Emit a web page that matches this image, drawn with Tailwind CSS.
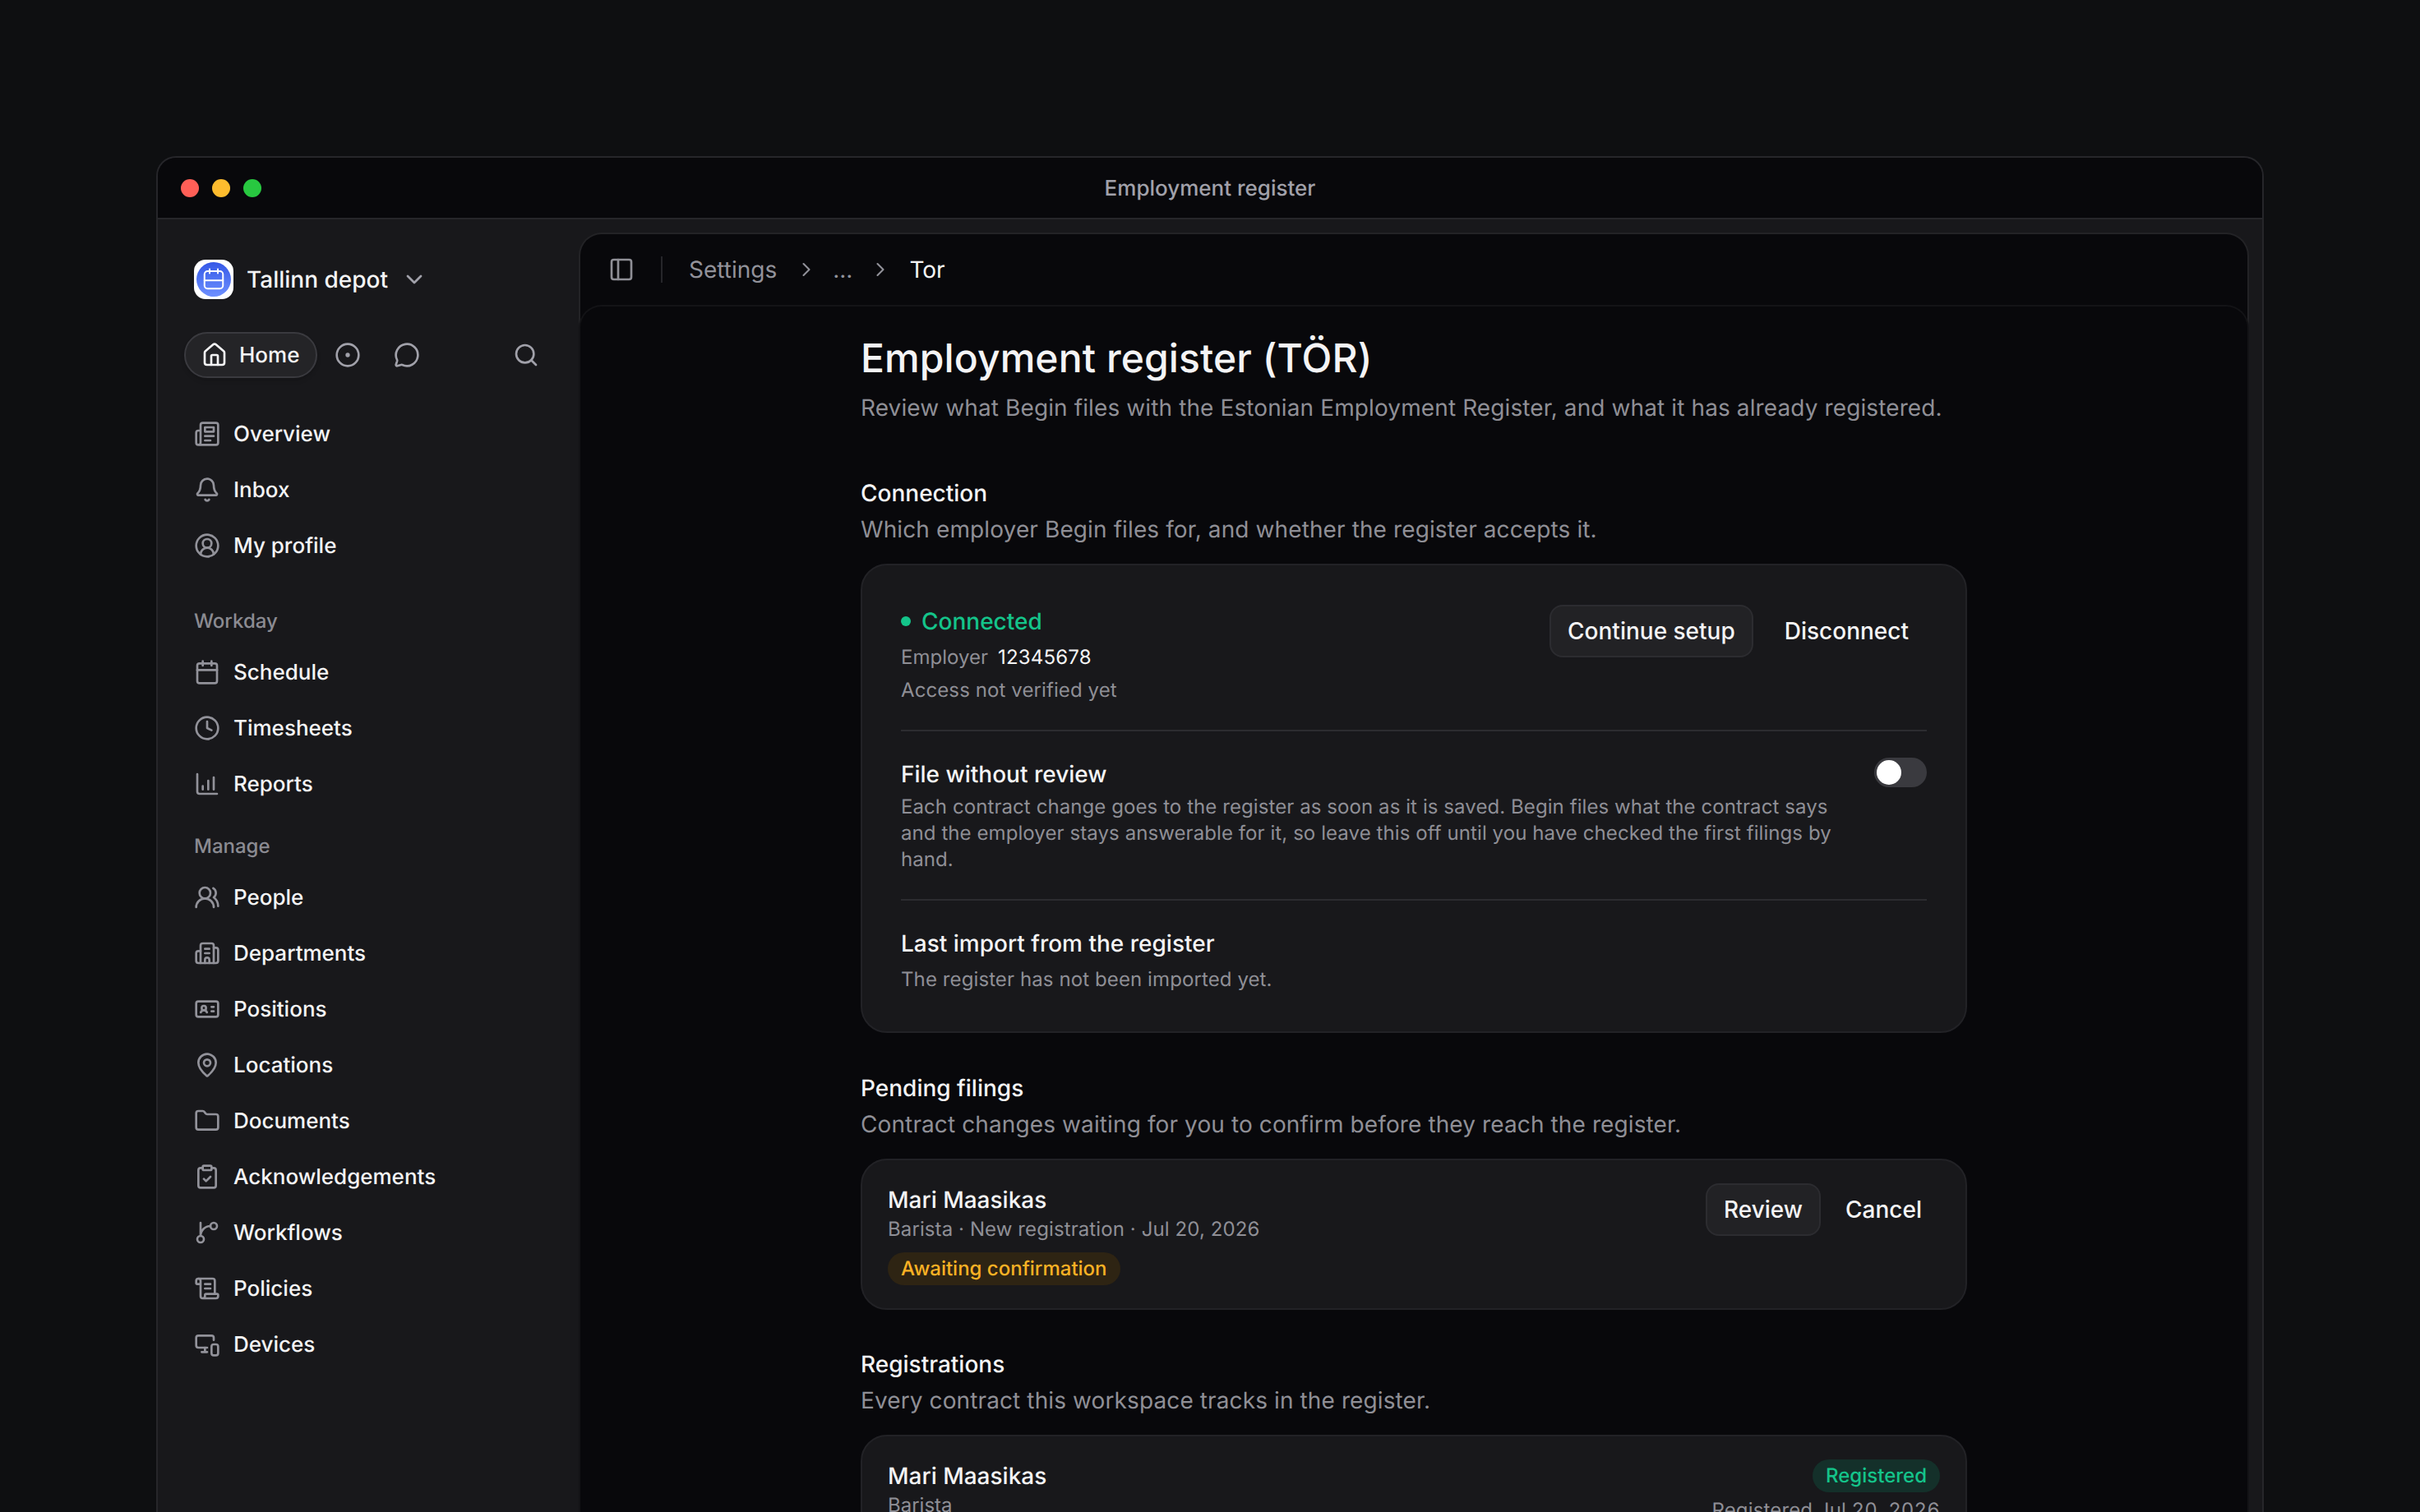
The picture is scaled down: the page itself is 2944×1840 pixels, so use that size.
<!DOCTYPE html>
<html>
<head>
  <meta charset="UTF-8">
  <meta name="viewport" content="width=device-width, initial-scale=1.0">
  <script src="https://cdn.jsdelivr.net/npm/@tailwindcss/browser@4"></script>
</head>
<body class="bg-[#0e0f11] font-['Inter',sans-serif] text-[#f4f4f5] [text-rendering:geometricPrecision]">
  <div class="h-[1840px] overflow-hidden pt-[190px] px-[190px]">
    <div class="w-[2564px] h-[1700px] flex flex-col rounded-t-[24px] border-2 border-b-0 border-[#26262a] bg-[#18181b] overflow-hidden">

      <!-- title bar -->
      <div class="relative h-[75px] shrink-0 flex items-center justify-center pt-[1px] bg-[#08080b] border-b-2 border-[#26262a]">
        <div class="absolute left-[28px] top-[26px] flex gap-[16px]">
          <span class="w-[22px] h-[22px] rounded-full bg-[#ff5f57]"></span>
          <span class="w-[22px] h-[22px] rounded-full bg-[#febc2e]"></span>
          <span class="w-[22px] h-[22px] rounded-full bg-[#28c840]"></span>
        </div>
        <span class="text-[26px] font-medium text-[#a1a1aa]">Employment register</span>
      </div>

      <div class="flex flex-1 min-h-0">
        <!-- sidebar -->
        <aside class="w-[512px] shrink-0 flex flex-col px-[44px] pt-[49px]">
          <div class="flex items-center h-[48px]">
            <div class="w-[48px] h-[48px] rounded-[14px] bg-white flex items-center justify-center">
              <div class="w-[42px] h-[42px] rounded-full bg-linear-to-b from-[#3557e6] to-[#6f90ff] flex items-center justify-center">
                <svg class="w-[30px] h-[30px] text-white" viewBox="0 0 24 24" fill="none" stroke="currentColor" stroke-width="1.6" stroke-linecap="round" stroke-linejoin="round"><path d="M8 2v4M16 2v4"/><rect x="3" y="4" width="18" height="17" rx="3"/><path d="M3 13h18"/></svg>
              </div>
            </div>
            <span class="ml-[16px] text-[28px] font-medium">Tallinn depot</span>
            <svg class="ml-[16px] w-8 h-8 text-[#a1a1aa]" viewBox="0 0 24 24" fill="none" stroke="currentColor" stroke-width="2" stroke-linecap="round" stroke-linejoin="round"><path d="m6 9 6 6 6-6"/></svg>
          </div>

          <div class="flex items-center h-[56px] mt-[40px] -ml-[12px]">
            <div class="h-[56px] w-[162px] flex items-center gap-[14px] pl-[19px] rounded-full border-2 border-[#3a3a3f] bg-[#242427] shadow-md">
              <svg class="w-8 h-8 shrink-0" viewBox="0 0 24 24" fill="none" stroke="currentColor" stroke-width="2" stroke-linecap="round" stroke-linejoin="round"><path d="M15 21v-8a1 1 0 0 0-1-1h-4a1 1 0 0 0-1 1v8"/><path d="M3 10a2 2 0 0 1 .709-1.528l7-5.999a2 2 0 0 1 2.582 0l7 5.999A2 2 0 0 1 21 10v9a2 2 0 0 1-2 2H5a2 2 0 0 1-2-2z"/></svg>
              <span class="text-[26px] font-medium">Home</span>
            </div>
            <svg class="ml-[21px] w-8 h-8 text-[#a1a1aa]" viewBox="0 0 24 24" fill="none" stroke="currentColor" stroke-width="2" stroke-linecap="round" stroke-linejoin="round"><circle cx="12" cy="12" r="10"/><circle cx="12" cy="12" r="1" fill="currentColor"/></svg>
            <svg class="ml-[40px] w-8 h-8 text-[#a1a1aa]" viewBox="0 0 24 24" fill="none" stroke="currentColor" stroke-width="2" stroke-linecap="round" stroke-linejoin="round"><path d="M2.992 16.342a2 2 0 0 1 .094 1.167l-1.065 3.29a1 1 0 0 0 1.236 1.168l3.413-.998a2 2 0 0 1 1.099.092 10 10 0 1 0-4.777-4.719"/></svg>
            <svg class="ml-[113px] w-8 h-8 text-[#a1a1aa]" viewBox="0 0 24 24" fill="none" stroke="currentColor" stroke-width="2" stroke-linecap="round" stroke-linejoin="round"><circle cx="11" cy="11" r="8"/><path d="m21 21-4.3-4.3"/></svg>
          </div>

          <nav class="flex flex-col mt-[34px] text-[26px] font-medium">
            <a class="h-[68px] flex items-center gap-4"><svg class="w-8 h-8 shrink-0 text-[#92929a]" viewBox="0 0 24 24" fill="none" stroke="currentColor" stroke-width="2" stroke-linecap="round" stroke-linejoin="round"><path d="M4 22h16a2 2 0 0 0 2-2V4a2 2 0 0 0-2-2H8a2 2 0 0 0-2 2v16a2 2 0 0 1-2 2Zm0 0a2 2 0 0 1-2-2v-9c0-1.1.9-2 2-2h2"/><path d="M18 14h-8M15 18h-5M10 6h8v4h-8V6Z"/></svg>Overview</a>
            <a class="h-[68px] flex items-center gap-4"><svg class="w-8 h-8 shrink-0 text-[#92929a]" viewBox="0 0 24 24" fill="none" stroke="currentColor" stroke-width="2" stroke-linecap="round" stroke-linejoin="round"><path d="M10.268 21a2 2 0 0 0 3.464 0"/><path d="M3.262 15.326A1 1 0 0 0 4 17h16a1 1 0 0 0 .74-1.673C19.41 13.956 18 12.499 18 8A6 6 0 0 0 6 8c0 4.499-1.411 5.956-2.738 7.326"/></svg>Inbox</a>
            <a class="h-[68px] flex items-center gap-4"><svg class="w-8 h-8 shrink-0 text-[#92929a]" viewBox="0 0 24 24" fill="none" stroke="currentColor" stroke-width="2" stroke-linecap="round" stroke-linejoin="round"><path d="M18 20a6 6 0 0 0-12 0"/><circle cx="12" cy="10" r="4"/><circle cx="12" cy="12" r="10"/></svg>My profile</a>

            <div class="h-[26px] mt-[45px] mb-[15px] flex items-center text-[24px] text-[#8b8b92]">Workday</div>
            <a class="h-[68px] flex items-center gap-4"><svg class="w-8 h-8 shrink-0 text-[#92929a]" viewBox="0 0 24 24" fill="none" stroke="currentColor" stroke-width="2" stroke-linecap="round" stroke-linejoin="round"><path d="M8 2v4M16 2v4"/><rect x="3" y="4" width="18" height="18" rx="2"/><path d="M3 10h18"/></svg>Schedule</a>
            <a class="h-[68px] flex items-center gap-4"><svg class="w-8 h-8 shrink-0 text-[#92929a]" viewBox="0 0 24 24" fill="none" stroke="currentColor" stroke-width="2" stroke-linecap="round" stroke-linejoin="round"><circle cx="12" cy="12" r="10"/><path d="M12 6v6l4 2"/></svg>Timesheets</a>
            <a class="h-[68px] flex items-center gap-4"><svg class="w-8 h-8 shrink-0 text-[#92929a]" viewBox="0 0 24 24" fill="none" stroke="currentColor" stroke-width="2" stroke-linecap="round" stroke-linejoin="round"><path d="M3 3v16a2 2 0 0 0 2 2h16"/><path d="M8 17v-3M13 17V9M18 17V6"/></svg>Reports</a>

            <div class="h-[26px] mt-[29px] mb-[15px] flex items-center text-[24px] text-[#8b8b92]">Manage</div>
            <a class="h-[68px] flex items-center gap-4"><svg class="w-8 h-8 shrink-0 text-[#92929a]" viewBox="0 0 24 24" fill="none" stroke="currentColor" stroke-width="2" stroke-linecap="round" stroke-linejoin="round"><path d="M18 21a8 8 0 0 0-16 0"/><circle cx="10" cy="8" r="5"/><path d="M22 20c0-3.37-2-6.5-4-8a5 5 0 0 0-.45-8.3"/></svg>People</a>
            <a class="h-[68px] flex items-center gap-4"><svg class="w-8 h-8 shrink-0 text-[#92929a]" viewBox="0 0 24 24" fill="none" stroke="currentColor" stroke-width="2" stroke-linecap="round" stroke-linejoin="round"><path d="M10 12h4M10 8h4M14 21v-3a2 2 0 0 0-4 0v3"/><path d="M6 10H4a2 2 0 0 0-2 2v7a2 2 0 0 0 2 2h16a2 2 0 0 0 2-2V9a2 2 0 0 0-2-2h-2"/><path d="M6 21V5a2 2 0 0 1 2-2h8a2 2 0 0 1 2 2v16"/></svg>Departments</a>
            <a class="h-[68px] flex items-center gap-4"><svg class="w-8 h-8 shrink-0 text-[#92929a]" viewBox="0 0 24 24" fill="none" stroke="currentColor" stroke-width="2" stroke-linecap="round" stroke-linejoin="round"><path d="M16 10h2M16 14h2"/><path d="M6.17 15a3 3 0 0 1 5.66 0"/><circle cx="9" cy="11" r="2"/><rect x="2" y="5" width="20" height="14" rx="2"/></svg>Positions</a>
            <a class="h-[68px] flex items-center gap-4"><svg class="w-8 h-8 shrink-0 text-[#92929a]" viewBox="0 0 24 24" fill="none" stroke="currentColor" stroke-width="2" stroke-linecap="round" stroke-linejoin="round"><path d="M20 10c0 4.993-5.539 10.193-7.399 11.799a1 1 0 0 1-1.202 0C9.539 20.193 4 14.993 4 10a8 8 0 0 1 16 0"/><circle cx="12" cy="10" r="3"/></svg>Locations</a>
            <a class="h-[68px] flex items-center gap-4"><svg class="w-8 h-8 shrink-0 text-[#92929a]" viewBox="0 0 24 24" fill="none" stroke="currentColor" stroke-width="2" stroke-linecap="round" stroke-linejoin="round"><path d="M20 20a2 2 0 0 0 2-2V8a2 2 0 0 0-2-2h-7.9a2 2 0 0 1-1.69-.9L9.6 3.9A2 2 0 0 0 7.93 3H4a2 2 0 0 0-2 2v13a2 2 0 0 0 2 2Z"/></svg>Documents</a>
            <a class="h-[68px] flex items-center gap-4"><svg class="w-8 h-8 shrink-0 text-[#92929a]" viewBox="0 0 24 24" fill="none" stroke="currentColor" stroke-width="2" stroke-linecap="round" stroke-linejoin="round"><rect x="8" y="2" width="8" height="4" rx="1"/><path d="M16 4h2a2 2 0 0 1 2 2v14a2 2 0 0 1-2 2H6a2 2 0 0 1-2-2V6a2 2 0 0 1 2-2h2"/><path d="m9 14 2 2 4-4"/></svg>Acknowledgements</a>
            <a class="h-[68px] flex items-center gap-4"><svg class="w-8 h-8 shrink-0 text-[#92929a]" viewBox="0 0 24 24" fill="none" stroke="currentColor" stroke-width="2" stroke-linecap="round" stroke-linejoin="round"><path d="M15 6a9 9 0 0 0-9 9V3"/><circle cx="18" cy="6" r="3"/><circle cx="6" cy="18" r="3"/></svg>Workflows</a>
            <a class="h-[68px] flex items-center gap-4"><svg class="w-8 h-8 shrink-0 text-[#92929a]" viewBox="0 0 24 24" fill="none" stroke="currentColor" stroke-width="2" stroke-linecap="round" stroke-linejoin="round"><path d="M15 12h-5M15 8h-5M19 17V5a2 2 0 0 0-2-2H4"/><path d="M8 21h12a2 2 0 0 0 2-2v-1a1 1 0 0 0-1-1H11a1 1 0 0 0-1 1v1a2 2 0 1 1-4 0V5a2 2 0 1 0-4 0v2a1 1 0 0 0 1 1h3"/></svg>Policies</a>
            <a class="h-[68px] flex items-center gap-4"><svg class="w-8 h-8 shrink-0 text-[#92929a]" viewBox="0 0 24 24" fill="none" stroke="currentColor" stroke-width="2" stroke-linecap="round" stroke-linejoin="round"><path d="M18 8V6a2 2 0 0 0-2-2H4a2 2 0 0 0-2 2v7a2 2 0 0 0 2 2h8"/><path d="M10 19v-3.96 3.15M7 19h5"/><rect x="16" y="12" width="6" height="10" rx="2"/></svg>Devices</a>
          </nav>
        </aside>

        <!-- main panel -->
        <main class="w-[2032px] mt-[16px] shrink-0 flex flex-col rounded-t-[28px] border-2 border-b-0 border-[#232326] bg-[#08080b]">
          <header class="h-[86px] shrink-0 flex items-center pl-[34px]">
            <svg class="w-8 h-8 text-[#8f8f96]" viewBox="0 0 24 24" fill="none" stroke="currentColor" stroke-width="2" stroke-linecap="round" stroke-linejoin="round"><rect x="3" y="3" width="18" height="18" rx="2"/><path d="M9 3v18"/></svg>
            <span class="ml-[32px] w-[2px] h-[32px] bg-[#26262a]"></span>
            <span class="ml-[32px] text-[28px] text-[#92929a]">Settings</span>
            <svg class="ml-[22px] w-7 h-7 text-[#92929a]" viewBox="0 0 24 24" fill="none" stroke="currentColor" stroke-width="1.8" stroke-linecap="round" stroke-linejoin="round"><path d="m9 18 6-6-6-6"/></svg>
            <span class="ml-[18px] text-[28px] text-[#92929a]">...</span>
            <svg class="ml-[20px] w-7 h-7 text-[#92929a]" viewBox="0 0 24 24" fill="none" stroke="currentColor" stroke-width="1.8" stroke-linecap="round" stroke-linejoin="round"><path d="m9 18 6-6-6-6"/></svg>
            <span class="ml-[21px] text-[28px]">Tor</span>
          </header>

          <section class="flex-1 rounded-t-[28px] border-t-2 border-x-2 border-[#131316] -mx-[2px]">
            <div class="w-[1346px] mx-auto pt-[31px]">
              <h1 class="h-[64px] leading-[64px] text-[48px] font-medium tracking-[0.1px]">Employment register (TÖR)</h1>
              <p class="mt-[8px] h-[40px] leading-[40px] text-[28px] tracking-[0.11px] text-[#8f8f96]">Review what Begin files with the Estonian Employment Register, and what it has already registered.</p>

              <h2 class="mt-[64px] h-[40px] leading-[40px] text-[28px] font-medium">Connection</h2>
              <p class="mt-[4px] h-[40px] leading-[40px] text-[28px] tracking-[0.11px] text-[#8f8f96]">Which employer Begin files for, and whether the register accepts it.</p>
              <div class="mt-[22px] rounded-[32px] border-2 border-[#222226] bg-[#18181b] px-[47px]">
                <div class="flex justify-between pt-[48px] pb-[32px] border-b-2 border-[#2c2c30]">
                  <div>
                    <div class="h-[40px] flex items-center gap-[13px] text-[28px] font-medium text-[#14c48a]"><span class="w-[12px] h-[12px] rounded-full bg-[#14c48a]"></span>Connected</div>
                    <div class="mt-[8px] h-[32px] leading-[32px] text-[24px] text-[#8f8f96]">Employer<span class="ml-[12px] tracking-[0.2px] text-[#f4f4f5]">12345678</span></div>
                    <div class="mt-[8px] h-[32px] leading-[32px] text-[24px] tracking-[0.1px] text-[#8f8f96]">Access not verified yet</div>
                  </div>
                  <div class="flex items-start gap-[16px]">
                    <button class="h-[64px] px-[20px] rounded-[16px] border-2 border-[#2c2c30] bg-[#222225] text-[28px] font-medium">Continue setup</button>
                    <button class="h-[64px] px-[22px] text-[28px] font-medium">Disconnect</button>
                  </div>
                </div>
                <div class="flex justify-between gap-[32px] pt-[32px] pb-[32px] border-b-2 border-[#2c2c30]">
                  <div class="flex-1 min-w-0">
                    <div class="h-[40px] leading-[40px] text-[28px] font-medium">File without review</div>
                    <p class="mt-[4px] leading-[32px] text-[24px] tracking-[0.08px] text-[#8f8f96]">Each contract change goes to the register as soon as it is saved. Begin files what the contract says and the employer stays answerable for it, so leave this off until you have checked the first filings by hand.</p>
                  </div>
                  <div class="w-[64px] h-[36px] shrink-0 rounded-full bg-[#3a3a3f] flex items-center pl-[3px]"><span class="w-[30px] h-[30px] rounded-full bg-white"></span></div>
                </div>
                <div class="pt-[32px] pb-[47px]">
                  <div class="h-[40px] leading-[40px] text-[28px] font-medium">Last import from the register</div>
                  <p class="mt-[8px] h-[32px] leading-[32px] text-[24px] tracking-[0.1px] text-[#8f8f96]">The register has not been imported yet.</p>
                </div>
              </div>

              <h2 class="mt-[47px] h-[40px] leading-[40px] text-[28px] font-medium">Pending filings</h2>
              <p class="mt-[4px] h-[40px] leading-[40px] text-[28px] tracking-[0.11px] text-[#8f8f96]">Contract changes waiting for you to confirm before they reach the register.</p>
              <div class="mt-[22px] flex justify-between rounded-[32px] border-2 border-[#222226] bg-[#18181b] px-[31px] py-[28px]">
                <div>
                  <div class="h-[40px] leading-[40px] text-[28px] font-medium">Mari Maasikas</div>
                  <div class="h-[32px] leading-[32px] text-[24px] tracking-[0.1px] text-[#8f8f96]">Barista · New registration · Jul 20, 2026</div>
                  <span class="mt-[12px] inline-flex h-[40px] items-center px-[16px] rounded-full bg-[#2e2413] text-[24px] font-medium text-[#fbb124]">Awaiting confirmation</span>
                </div>
                <div class="flex items-start gap-[8px]">
                  <button class="h-[64px] px-[20px] rounded-[16px] border-2 border-[#2c2c30] bg-[#222225] text-[28px] font-medium">Review</button>
                  <button class="h-[64px] px-[22px] text-[28px] font-medium">Cancel</button>
                </div>
              </div>

              <h2 class="mt-[46px] h-[40px] leading-[40px] text-[28px] font-medium">Registrations</h2>
              <p class="mt-[4px] h-[40px] leading-[40px] text-[28px] tracking-[0.11px] text-[#8f8f96]">Every contract this workspace tracks in the register.</p>
              <div class="mt-[22px] flex justify-between rounded-[32px] border-2 border-[#222226] bg-[#18181b] px-[31px] py-[28px]">
                <div>
                  <div class="h-[40px] leading-[40px] text-[28px] font-medium">Mari Maasikas</div>
                  <div class="h-[32px] leading-[32px] text-[24px] text-[#8f8f96]">Barista</div>
                </div>
                <div class="flex flex-col items-end">
                  <span class="inline-flex h-[40px] items-center px-[16px] rounded-full bg-[#14302a] text-[24px] font-medium text-[#14c48a]">Registered</span>
                  <div class="mt-[6px] h-[32px] leading-[32px] text-[24px] tabular-nums tracking-[0.15px] text-[#8f8f96]">Registered Jul 20, 2026</div>
                </div>
              </div>
            </div>
          </section>
        </main>
      </div>
    </div>
  </div>
</body>
</html>
